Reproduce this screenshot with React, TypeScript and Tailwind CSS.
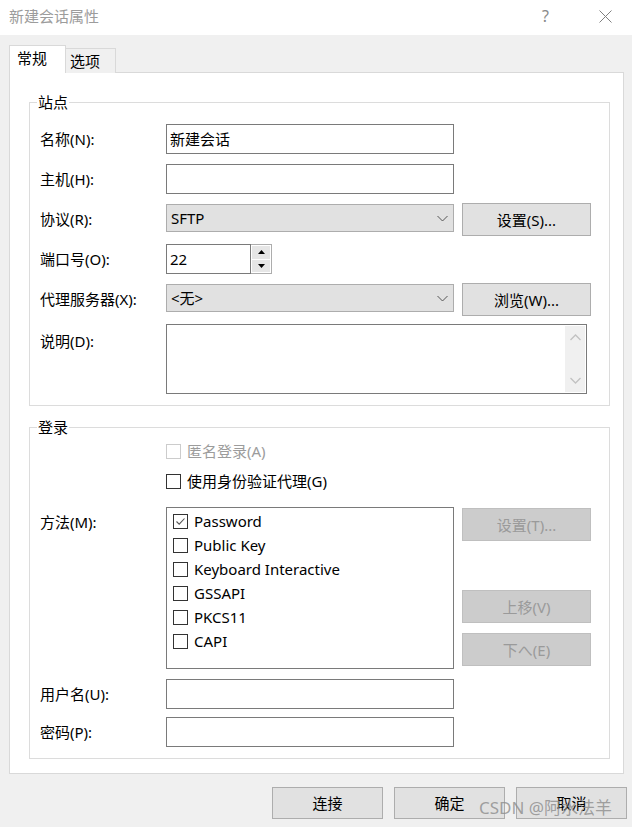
import React from 'react';

const font = { fontFamily: '"Noto Sans", "Noto Sans CJK SC", sans-serif' };

const CheckBox = ({ checked = false, disabled = false }: { checked?: boolean; disabled?: boolean }) => (
  <span
    className={`w-[15px] h-[15px] shrink-0 border bg-white flex items-center justify-center ${
      disabled ? 'border-[#cccccc]' : 'border-[#333333]'
    }`}
  >
    {checked && (
      <svg width="11" height="11" viewBox="0 0 11 11">
        <path d="M1.5 5.5 L4.2 8.2 L9.5 2.5" fill="none" stroke="#555" strokeWidth="1.1" />
      </svg>
    )}
  </span>
);

const Chevron = () => (
  <svg width="11" height="7" viewBox="0 0 11 7" className="shrink-0">
    <path d="M0.5 1 L5.5 6 L10.5 1" fill="none" stroke="#555" strokeWidth="1" />
  </svg>
);

const Btn = ({ children, disabled = false }: { children: React.ReactNode; disabled?: boolean }) => (
  <div
    className={`w-[129px] h-[33px] border flex items-center justify-center text-[15px] ${
      disabled ? 'bg-[#cccccc] border-[#bfbfbf] text-[#9a9a9a]' : 'bg-[#e1e1e1] border-[#adadad] text-black'
    }`}
  >
    {children}
  </div>
);

const TextBox = ({ value = '', width = 'w-[288px]' }: { value?: string; width?: string }) => (
  <div className={`${width} h-[30px] border border-[#7a7a7a] bg-white flex items-center px-[3px] text-[15px]`}>
    {value}
  </div>
);

const Select = ({ value }: { value: string }) => (
  <div className="w-[288px] h-[28px] border border-[#adadad] bg-[#e1e1e1] flex items-center justify-between pl-[4px] pr-[5px] text-[15px]">
    <span>{value}</span>
    <Chevron />
  </div>
);

const Label = ({ children }: { children: React.ReactNode }) => (
  <div className="w-[126px] h-[30px] flex items-center text-[15px] shrink-0">{children}</div>
);

const Group = ({ title, children, className = '' }: { title: string; children: React.ReactNode; className?: string }) => (
  <div className={`relative w-[581px] border border-[#dcdcdc] pl-[10px] ${className}`}>
    <span className="absolute -top-[11px] left-[7px] bg-white px-[1px] leading-[20px] text-[15px]">{title}</span>
    {children}
  </div>
);

const methods = ['Password', 'Public Key', 'Keyboard Interactive', 'GSSAPI', 'PKCS11', 'CAPI'];

export default function App() {
  return (
    <div className="w-[632px] h-[827px] bg-[#f0f0f0] flex flex-col relative text-black leading-[20px]" style={font}>
      {/* Title bar */}
      <div className="h-[35px] bg-white flex items-center pl-[9px] pb-[3px] shrink-0">
        <span className="text-[15px] text-[#9c9c9c] flex-1">新建会话属性</span>
        <span className="text-[16px] text-[#8a8a8a] mr-[50px]">?</span>
        <svg width="13" height="13" viewBox="0 0 13 13" className="mr-[20px]">
          <path d="M0.5 0.5 L12.5 12.5 M12.5 0.5 L0.5 12.5" stroke="#808080" strokeWidth="1" />
        </svg>
      </div>

      {/* Tabs */}
      <div className="mt-[10px] pl-[9px] flex items-end h-[28px] -mb-px relative z-10">
        <div className="w-[57px] h-[28px] bg-white border border-b-0 border-[#d9d9d9] pl-[7px] pt-[2px] text-[15px]">常规</div>
        <div className="w-[50px] h-[25px] bg-[#f0f0f0] border border-l-0 border-b-0 border-[#d9d9d9] pl-[4px] pt-[2px] text-[15px]">选项</div>
      </div>

      {/* Panel */}
      <div className="ml-[9px] w-[615px] h-[702px] border border-[#d9d9d9] bg-white pt-[29px] pl-[19px]">
        <Group title="站点" className="pt-[21px] pb-[11px]">
          <div className="flex h-[40px]">
            <Label>名称(N):</Label>
            <TextBox value="新建会话" />
          </div>
          <div className="flex h-[40px]">
            <Label>主机(H):</Label>
            <TextBox />
          </div>
          <div className="flex h-[40px]">
            <Label>协议(R):</Label>
            <Select value="SFTP" />
            <div className="ml-[8px] -mt-[1px]">
              <Btn>设置(S)...</Btn>
            </div>
          </div>
          <div className="flex h-[40px]">
            <Label>端口号(O):</Label>
            <TextBox value="22" width="w-[85px]" />
            <div className="w-[21px] h-[30px] border border-l-0 border-[#adadad] bg-white flex flex-col p-[1px] gap-[1px]">
              <div className="flex-1 bg-[#e6e6e6] flex items-center justify-center">
                <svg width="7" height="4" viewBox="0 0 7 4"><path d="M0 4 L3.5 0 L7 4 Z" fill="#000" /></svg>
              </div>
              <div className="flex-1 bg-[#e6e6e6] flex items-center justify-center">
                <svg width="7" height="4" viewBox="0 0 7 4"><path d="M0 0 L3.5 4 L7 0 Z" fill="#000" /></svg>
              </div>
            </div>
          </div>
          <div className="flex h-[40px]">
            <Label>代理服务器(X):</Label>
            <Select value="<无>" />
            <div className="ml-[8px] -mt-[1px]">
              <Btn>浏览(W)...</Btn>
            </div>
          </div>
          <div className="flex">
            <div className="w-[126px] pt-[7px] text-[15px]">说明(D):</div>
            <div className="w-[421px] h-[70px] border border-[#7a7a7a] bg-white flex justify-end p-[1px]">
              <div className="w-[20px] bg-[#f0f0f0] flex flex-col items-center justify-between py-[8px]">
                <svg width="11" height="7" viewBox="0 0 11 7"><path d="M0.5 6 L5.5 1 L10.5 6" fill="none" stroke="#c2c2c2" strokeWidth="1.3" /></svg>
                <svg width="11" height="7" viewBox="0 0 11 7"><path d="M0.5 1 L5.5 6 L10.5 1" fill="none" stroke="#c2c2c2" strokeWidth="1.3" /></svg>
              </div>
            </div>
          </div>
        </Group>

        <Group title="登录" className="mt-[21px] pt-[8px] pb-[11px]">
          <div className="flex h-[30px] items-center pl-[126px] gap-[6px] text-[15px] text-[#9c9c9c]">
            <CheckBox disabled />
            <span>匿名登录(A)</span>
          </div>
          <div className="flex h-[30px] items-center pl-[126px] gap-[6px] text-[15px]">
            <CheckBox />
            <span>使用身份验证代理(G)</span>
          </div>
          <div className="flex mt-[11px]">
            <div className="w-[126px] pt-[5px] text-[15px]">方法(M):</div>
            <div className="w-[288px] h-[162px] border border-[#7a7a7a] bg-white pt-[1px] pl-[6px]">
              {methods.map((m, i) => (
                <div key={m} className="h-[24px] flex items-center gap-[6px] text-[15px]">
                  <CheckBox checked={i === 0} />
                  <span>{m}</span>
                </div>
              ))}
            </div>
            <div className="ml-[8px] pt-[1px] flex flex-col">
              <Btn disabled>设置(T)...</Btn>
              <div className="mt-[49px]">
                <Btn disabled>上移(V)</Btn>
              </div>
              <div className="mt-[10px]">
                <Btn disabled>下へ(E)</Btn>
              </div>
            </div>
          </div>
          <div className="flex mt-[10px]">
            <Label>用户名(U):</Label>
            <TextBox />
          </div>
          <div className="flex mt-[8px]">
            <Label>密码(P):</Label>
            <TextBox />
          </div>
        </Group>
      </div>

      {/* Footer */}
      <div className="mt-[13px] flex justify-end pr-[5px] gap-[11px]">
        {['连接', '确定', '取消'].map((t) => (
          <div key={t} className="w-[111px] h-[32px] bg-[#e1e1e1] border border-[#adadad] flex items-center justify-center text-[15px]">
            {t}
          </div>
        ))}
      </div>

      {/* watermark */}
      <span className="absolute left-[479px] top-[797px] text-[17px] leading-[22px] text-[#8c8c8c]/80 pointer-events-none">
        CSDN @阿水法羊
      </span>
    </div>
  );
}
